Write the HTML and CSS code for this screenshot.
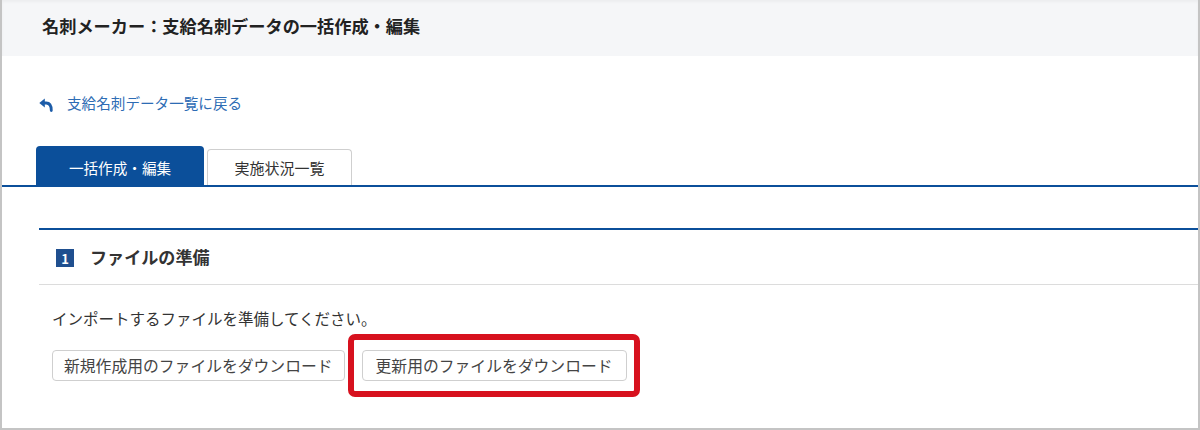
FILE: index.html
```html
<!DOCTYPE html>
<html lang="ja">
<head>
<meta charset="utf-8">
<title>名刺メーカー</title>
<link rel="stylesheet" href="styles.css">
</head>
<body>
<div class="frame">
  <header class="page-header">
    <h1 class="page-title">名刺メーカー：支給名刺データの一括作成・編集</h1>
  </header>
  <main class="content">
    <a class="back-link" href="#">
      <svg class="back-icon" width="14" height="14" viewBox="0 0 14 14" aria-hidden="true">
        <path d="M0.3 5 L5.8 0.4 L5.8 9.6 Z" fill="#1d5ca8"/>
        <path d="M5 5 H7.2 C10.6 5 12.3 7.4 12.3 12.6" fill="none" stroke="#1d5ca8" stroke-width="2.8" stroke-linecap="round"/>
      </svg>
      <span>支給名刺データ一覧に戻る</span>
    </a>
    <nav class="tabs">
      <a class="tab tab-active" href="#">一括作成・編集</a>
      <a class="tab" href="#">実施状況一覧</a>
    </nav>
    <section class="step">
      <div class="step-head">
        <span class="step-num">1</span>
        <h2 class="step-title">ファイルの準備</h2>
      </div>
      <div class="step-body">
        <p class="step-text">インポートするファイルを準備してください。</p>
        <div class="actions">
          <button class="btn" type="button">新規作成用のファイルをダウンロード</button>
          <span class="highlight">
            <button class="btn btn-update" type="button">更新用のファイルをダウンロード</button>
          </span>
        </div>
      </div>
    </section>
  </main>
</div>
</body>
</html>
```
FILE: styles.css
```css
* { box-sizing: border-box; }
html, body { margin: 0; padding: 0; background: #ffffff; }
body {
  font-family: "Noto Sans CJK JP", "Noto Sans", sans-serif;
  color: #333333;
}
.frame {
  width: 1200px;
  height: 430px;
  border-left: 2px solid #c4c4c4;
  border-right: 2px solid #c4c4c4;
  border-bottom: 2px solid #c4c4c4;
  overflow: hidden;
  background: #ffffff;
}
.page-header {
  height: 56px;
  background: #f5f6f8;
  box-shadow: inset 0 2px 3px rgba(0, 0, 0, 0.04);
  padding: 14px 0 0 40px;
}
.page-title {
  margin: 0;
  font-size: 17.2px;
  line-height: 24px;
  font-weight: 700;
  color: #222222;
}
.content {
  padding-top: 37px;
}
.back-link {
  display: flex;
  align-items: center;
  height: 20px;
  margin-left: 37px;
  color: #2d6cb4;
  text-decoration: none;
  font-size: 14.6px;
  line-height: 20px;
}
.back-icon {
  flex: none;
  margin-right: 14px;
  margin-top: 3px;
}
.tabs {
  display: flex;
  align-items: flex-end;
  gap: 3px;
  margin-top: 33px;
  padding-left: 34px;
  border-bottom: 2px solid #0b4f9a;
}
.tab {
  display: block;
  text-align: center;
  text-decoration: none;
  font-size: 14.6px;
  line-height: 20px;
  color: #333333;
  border-radius: 4px 4px 0 0;
}
.tab-active {
  width: 168px;
  height: 39px;
  padding-top: 12px;
  background: #0b4f9a;
  color: #ffffff;
}
.tab:not(.tab-active) {
  width: 145px;
  height: 36px;
  padding-top: 8px;
  border: 1px solid #cfcfcf;
  border-bottom: none;
  font-size: 15px;
}
.step {
  margin: 41px 0 0 37px;
  border-top: 2px solid #0b4f9a;
}
.step-head {
  display: flex;
  align-items: center;
  height: 55px;
  padding-left: 17px;
  border-bottom: 1px solid #dcdcdc;
}
.step-num {
  flex: none;
  display: flex;
  align-items: center;
  justify-content: center;
  width: 18px;
  height: 18px;
  background: #1f4f8f;
  color: #ffffff;
  font-size: 13px;
  font-weight: 700;
  line-height: 1;
  margin-right: 16px;
  margin-top: 2px;
}
.step-title {
  margin: 0;
  font-size: 17.1px;
  line-height: 24px;
  font-weight: 700;
  color: #333333;
}
.step-body {
  padding: 21px 0 0 13px;
}
.step-text {
  margin: 0;
  font-size: 15.5px;
  line-height: 24px;
  color: #333333;
}
.actions {
  display: flex;
  align-items: center;
  gap: 17px;
  margin-top: 20px;
}
.btn {
  font-family: "Noto Sans CJK JP", "Noto Sans", sans-serif;
  font-size: 15.8px;
  line-height: 20px;
  height: 31px;
  padding: 0 11px;
  background: #ffffff;
  color: #444444;
  border: 1px solid #cfcfcf;
  border-radius: 4px;
}
.btn-update {
  padding: 0 13px;
}
.highlight {
  position: relative;
  display: inline-flex;
}
.highlight::after {
  content: "";
  position: absolute;
  left: -14px;
  top: -16px;
  right: -13px;
  bottom: -16px;
  border: 6px solid #d7111e;
  border-radius: 7px;
  pointer-events: none;
}
```
